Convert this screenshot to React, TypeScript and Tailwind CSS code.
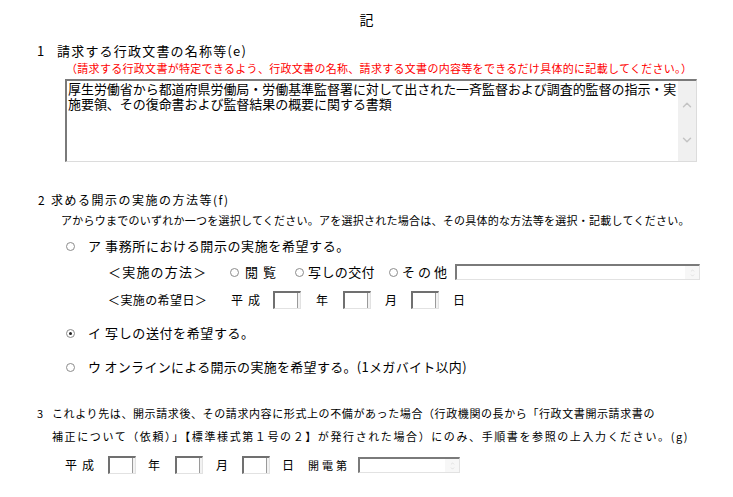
import { ChevronUp, ChevronDown } from "lucide-react"

// ─── Small form pieces ────────────────────────────────────────────────────────

function Radio({ checked = false }: { checked?: boolean }) {
  return (
    <span className="inline-flex h-[9px] w-[9px] shrink-0 items-center justify-center rounded-full border border-[#8c8c8c] bg-white">
      {checked && <span className="h-[3px] w-[3px] rounded-full bg-[#222]" />}
    </span>
  )
}

function DateBox() {
  return (
    <span className="flex h-[18px] w-[28px] shrink-0 border-t-2 border-l-2 border-r border-b border-t-[#707070] border-l-[#707070] border-r-[#e2e2e2] border-b-[#e2e2e2] bg-white">
      <span className="flex-1" />
      <span className="w-[3px] border-l border-[#9a9a9a] bg-[#f2f2f2]" />
    </span>
  )
}

function SpinInput({ width }: { width: string }) {
  return (
    <span
      className={`flex h-[16px] ${width} shrink-0 border-t-2 border-l-2 border-r border-b border-t-[#7a7a7a] border-l-[#7a7a7a] border-r-[#e2e2e2] border-b-[#e2e2e2] bg-white`}
    >
      <span className="flex-1" />
      <span className="flex w-[14px] flex-col items-center justify-center bg-[#f7f7f7] text-[#c4c4c4]">
        <ChevronUp className="h-[5px] w-[5px]" strokeWidth={2} />
        <ChevronDown className="h-[5px] w-[5px]" strokeWidth={2} />
      </span>
    </span>
  )
}

// ─── Page ─────────────────────────────────────────────────────────────────────

export default function App() {
  return (
    <div className="h-[497px] w-[733px] overflow-hidden bg-white text-black [font-family:'Noto_Sans_CJK_JP','Noto_Sans',sans-serif]">
      {/* title */}
      <div className="pt-[11px] text-center text-[14px] leading-[16px]">記</div>

      {/* 1 */}
      <div className="mt-[16px] flex pl-[37px] text-[13px] leading-[16px] tracking-[1.2px]">
        <span className="w-[20px]">1</span>
        <span>請求する行政文書の名称等(e)</span>
      </div>
      <div className="mt-[2px] pl-[66px] text-[11px] leading-[14px] tracking-[0.3px] text-[#ff0000]">
        （請求する行政文書が特定できるよう、行政文書の名称、請求する文書の内容等をできるだけ具体的に記載してください。）
      </div>
      <div className="ml-[65px] mt-[4px] flex h-[83px] w-[632px] border-t-2 border-l-2 border-r border-b border-t-[#7a7a7a] border-l-[#7a7a7a] border-r-[#dcdcdc] border-b-[#dcdcdc] bg-white">
        <div className="flex-1 pl-[1px] text-[13px] leading-[15px] tracking-[-0.05px]">
          厚生労働省から都道府県労働局・労働基準監督署に対して出された一斉監督および調査的監督の指示・実
          <br />
          施要領、その復命書および監督結果の概要に関する書類
        </div>
        <div className="flex w-[18px] flex-col items-center bg-[#f0f0f0] pt-[17px] text-[#c4c4c4]">
          <ChevronUp className="h-[14px] w-[14px]" strokeWidth={2.5} />
          <ChevronDown className="mt-[21px] h-[14px] w-[14px]" strokeWidth={2.5} />
        </div>
      </div>

      {/* 2 */}
      <div className="mt-[30px] flex pl-[38px] text-[12px] leading-[16px] tracking-[1.5px]">
        <span className="w-[13px]">2</span>
        <span>求める開示の実施の方法等(f)</span>
      </div>
      <div className="mt-[5px] pl-[61px] text-[11px] leading-[14px] tracking-[0.25px]">
        アからウまでのいずれか一つを選択してください。アを選択された場合は、その具体的な方法等を選択・記載してください。
      </div>

      <div className="mt-[11px] flex h-[16px] items-center pl-[66px] text-[13px] tracking-[0.6px]">
        <Radio />
        <span className="ml-[13px]">ア 事務所における開示の実施を希望する。</span>
      </div>

      <div className="mt-[9px] flex h-[18px] items-center pl-[108px] text-[13px]">
        <span className="w-[100px] tracking-[1.2px]">＜実施の方法＞</span>
        <span className="ml-[22px]">
          <Radio />
        </span>
        <span className="ml-[6px] tracking-[5px]">閲覧</span>
        <span className="ml-[14px]">
          <Radio />
        </span>
        <span className="ml-[4px] tracking-[0.4px]">写しの交付</span>
        <span className="ml-[14px]">
          <Radio />
        </span>
        <span className="ml-[4px] tracking-[3px]">その他</span>
        <span className="ml-[5px]">
          <SpinInput width="w-[245px]" />
        </span>
      </div>

      <div className="mt-[10px] flex h-[18px] items-center pl-[108px] text-[12px]">
        <span className="w-[123px] tracking-[0.4px]">＜実施の希望日＞</span>
        <span className="w-[42px] tracking-[5px]">平成</span>
        <DateBox />
        <span className="w-[42px] pl-[15px]">年</span>
        <DateBox />
        <span className="w-[40px] pl-[14px]">月</span>
        <DateBox />
        <span className="pl-[14px]">日</span>
      </div>

      <div className="mt-[16px] flex h-[16px] items-center pl-[66px] text-[13px] tracking-[0.6px]">
        <Radio checked />
        <span className="ml-[13px]">イ 写しの送付を希望する。</span>
      </div>

      <div className="mt-[18px] flex h-[16px] items-center pl-[66px] text-[13px] tracking-[0.3px]">
        <Radio />
        <span className="ml-[13px]">ウ オンラインによる開示の実施を希望する。(1メガバイト以内)</span>
      </div>

      {/* 3 */}
      <div className="mt-[27px] flex pl-[37px] text-[11px] leading-[23px] tracking-[0.6px]">
        <span className="w-[15px]">3</span>
        <span>
          これより先は、開示請求後、その請求内容に形式上の不備があった場合（行政機関の長から「行政文書開示請求書の
          <br />
          <span className="tracking-[1.6px]">
            補正について（依頼）」【標準様式第１号の２】が発行された場合）にのみ、手順書を参照の上入力ください。(g)
          </span>
        </span>
      </div>

      <div className="mt-[8px] flex h-[18px] items-center pl-[65px] text-[12px]">
        <span className="w-[43px] tracking-[5px]">平成</span>
        <DateBox />
        <span className="w-[39px] pl-[12px]">年</span>
        <DateBox />
        <span className="w-[39px] pl-[13px]">月</span>
        <DateBox />
        <span className="w-[38px] pl-[12px]">日</span>
        <span className="w-[50px] text-[11px] tracking-[3px]">開電第</span>
        <SpinInput width="w-[102px]" />
      </div>
    </div>
  )
}
